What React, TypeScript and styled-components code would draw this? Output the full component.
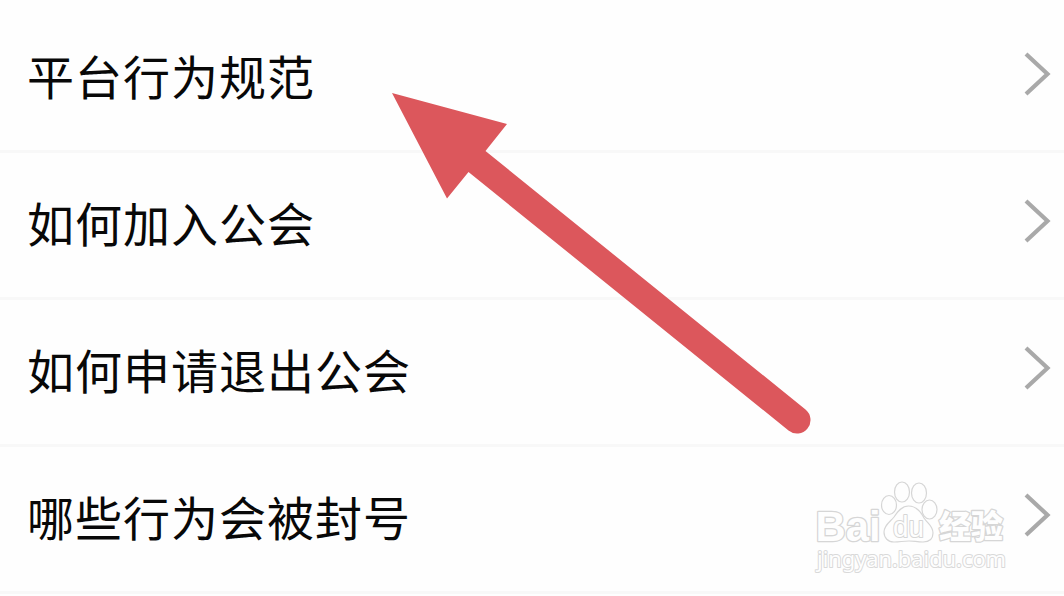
import React from "react"
import styled, { createGlobalStyle } from "styled-components"

const GlobalStyle = createGlobalStyle`
  body {
    margin: 0;
    background-color: #fefefe;
    overflow: hidden;
  }
`

const Page = styled.main`
  position: relative;
  width: 1064px;
  height: 596px;
  overflow: hidden;
  background-color: #fefefe;
  font-family: "Noto Sans CJK SC", sans-serif;
`

const List = styled.ul`
  margin: 0;
  padding: 6px 0 0;
  list-style: none;
`

const Row = styled.li`
  display: flex;
  align-items: center;
  justify-content: space-between;
  box-sizing: border-box;
  height: 147px;
  padding: 0 12px 9px 27px;
  border-bottom: 3px solid #f8f8f8;
`

const Label = styled.span`
  margin-top: 2px;
  font-size: 47px;
  line-height: 60px;
  letter-spacing: 1px;
  color: #080808;
`

const Chevron = styled.svg`
  display: block;
  width: 28px;
  height: 46px;
  fill: none;
  stroke: #a9a9a9;
  stroke-width: 4.2;
`

const Arrow = styled.svg`
  position: absolute;
  left: 392px;
  top: 93px;
  width: 420px;
  height: 342px;
  fill: #dc575c;
`

const Watermark = styled.svg`
  position: absolute;
  left: 810px;
  top: 475px;
  width: 200px;
  height: 105px;
  fill: #fefefe;
  stroke: #d6d6d6;
  stroke-width: 1.2;
  stroke-linejoin: round;
`

// the fill is painted last, so the rim stays outside the letters
const Outlined = styled.text`
  paint-order: stroke;
  stroke-width: 2.6;
`

const Brand = styled(Outlined)`
  font: bold 42px "Liberation Sans", sans-serif;
`

const Paw = styled(Outlined)`
  font: 29px "Liberation Sans", sans-serif;
  stroke-width: 2;
`

const Product = styled(Outlined)`
  font: 900 32px "Noto Sans CJK SC", sans-serif;
`

const Site = styled(Outlined)`
  font: 22px "Noto Sans", sans-serif;
  stroke: #d9d9d9;
  stroke-width: 2;
`

const items = [
  "平台行为规范",
  "如何加入公会",
  "如何申请退出公会",
  "哪些行为会被封号"
]

export default function App(){
  return (
    <Page>
      <GlobalStyle />

      <List>
        {items.map(item => (
          <Row key={item}>
            <Label>{item}</Label>
            <Chevron viewBox="0 0 28 46">
              <path d="M2 3 L23.5 23 L2 43" />
            </Chevron>
          </Row>
        ))}
      </List>

      <Arrow viewBox="0 0 420 342">
        <path d="M0 0 L115 31 L93.5 58 L413.5 316.5 A13.5 13.5 0 0 1 396.5 337.5 L76.5 79 L55 105.5 Z" />
      </Arrow>

      <Watermark viewBox="0 0 200 105">
        <Brand x="5.5" y="65.5" textLength="65" lengthAdjust="spacingAndGlyphs">Bai</Brand>
        <ellipse cx="79" cy="30" rx="7.5" ry="9.5" />
        <ellipse cx="92" cy="17" rx="7.5" ry="10" />
        <ellipse cx="109" cy="18" rx="7.5" ry="10" />
        <ellipse cx="119.5" cy="34.5" rx="7.5" ry="9.5" />
        <path d="M98.5 31 C106 31 111 37 114 43 C118 49 123 51 123 58 C123 64 119 67 113 67 C107 67 104 66 99 66 C93 66 90 67 84 67 C78 67 74 63 74 57 C74 50 80 47 84 42 C88 36 92 31 98.5 31 Z" />
        <Paw x="83" y="62" textLength="31" lengthAdjust="spacingAndGlyphs">du</Paw>
        <Product x="129" y="63" textLength="64" lengthAdjust="spacingAndGlyphs">经验</Product>
        <Site x="7" y="91.5" textLength="189" lengthAdjust="spacingAndGlyphs">jingyan.baidu.com</Site>
      </Watermark>
    </Page>
  )
}
